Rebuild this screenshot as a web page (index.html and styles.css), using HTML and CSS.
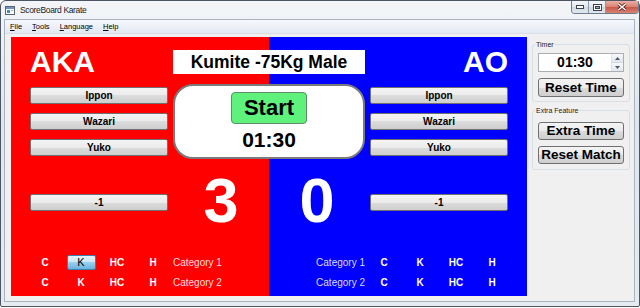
FILE: index.html
```html
<!DOCTYPE html>
<html>
<head>
<meta charset="utf-8">
<title>ScoreBoard Karate</title>
<link rel="stylesheet" href="styles.css">
</head>
<body>
<div class="window">
  <div class="titlebar">
    <span class="app-icon">
      <svg width="10" height="9" viewBox="0 0 10 9">
        <rect x="0.5" y="0.5" width="9" height="8" fill="#fff" stroke="#5a6470"/>
        <rect x="1" y="1" width="8" height="2" fill="#6d93c4"/>
        <rect x="2" y="4" width="3" height="3" fill="#3f8fb8"/>
        <rect x="6" y="4" width="2" height="1" fill="#9ab"/>
      </svg>
    </span>
    <span class="title">ScoreBoard Karate</span>
    <div class="caption-btns">
      <span class="cb">
        <svg width="8" height="4" viewBox="0 0 8 4"><rect x="0.5" y="0.5" width="7" height="3" fill="#fff" stroke="#3b4452"/></svg>
      </span>
      <span class="cb">
        <svg width="9" height="7" viewBox="0 0 9 7"><rect x="0.5" y="0.5" width="8" height="6" fill="#fff" stroke="#3b4452"/><rect x="2.5" y="2.5" width="4" height="2" fill="#9aa6b4" stroke="#3b4452"/></svg>
      </span>
      <span class="cb close">
        <svg width="10" height="8" viewBox="0 0 10 8"><path d="M1.5 1 L8.5 7 M8.5 1 L1.5 7" stroke="#5a1a12" stroke-width="3"/><path d="M1.5 1 L8.5 7 M8.5 1 L1.5 7" stroke="#fff" stroke-width="1.6"/></svg>
      </span>
    </div>
  </div>
  <div class="client">
    <div class="menubar">
      <span class="menu-item"><u>F</u>ile</span>
      <span class="menu-item"><u>T</u>ools</span>
      <span class="menu-item"><u>L</u>anguage</span>
      <span class="menu-item"><u>H</u>elp</span>
    </div>
    <div class="content">
      <div class="board">
        <div class="top">
          <div class="side-name">AKA</div>
          <div class="match-title">Kumite -75Kg Male</div>
          <div class="side-name ao">AO</div>

          <div class="btn-col">
            <button class="wbtn">Ippon</button>
            <button class="wbtn">Wazari</button>
            <button class="wbtn">Yuko</button>
          </div>
          <div class="clock-box">
            <button class="start">Start</button>
            <div class="clock">01:30</div>
          </div>
          <div class="btn-col">
            <button class="wbtn">Ippon</button>
            <button class="wbtn">Wazari</button>
            <button class="wbtn">Yuko</button>
          </div>

          <div class="minus-col"><button class="wbtn">-1</button></div>
          <div class="scores"><span>3</span><span>0</span></div>
          <div class="minus-col"><button class="wbtn">-1</button></div>
        </div>

        <div class="penalties">
          <div class="pen-half left">
            <div class="pen-row">
              <span class="pc">C</span>
              <span class="pc"><span class="kbtn">K</span></span>
              <span class="pc">HC</span>
              <span class="pc">H</span>
              <span class="cat">Category 1</span>
            </div>
            <div class="pen-row">
              <span class="pc">C</span>
              <span class="pc">K</span>
              <span class="pc">HC</span>
              <span class="pc">H</span>
              <span class="cat">Category 2</span>
            </div>
          </div>
          <div class="pen-half right">
            <div class="pen-row">
              <span class="cat">Category 1</span>
              <span class="pc">C</span>
              <span class="pc">K</span>
              <span class="pc">HC</span>
              <span class="pc">H</span>
            </div>
            <div class="pen-row">
              <span class="cat">Category 2</span>
              <span class="pc">C</span>
              <span class="pc">K</span>
              <span class="pc">HC</span>
              <span class="pc">H</span>
            </div>
          </div>
        </div>
      </div>

      <aside class="sidepanel">
        <fieldset class="group timer">
          <legend>Timer</legend>
          <div class="spin">
            <span class="spin-value">01:30</span>
            <span class="spin-arrows">
              <span class="arrow up"><svg width="5" height="3" viewBox="0 0 5 3"><path d="M0 3 L2.5 0 L5 3Z" fill="#4a5a6a"/></svg></span>
              <span class="arrow down"><svg width="5" height="3" viewBox="0 0 5 3"><path d="M0 0 L2.5 3 L5 0Z" fill="#4a5a6a"/></svg></span>
            </span>
          </div>
          <button class="sbtn">Reset Time</button>
        </fieldset>
        <fieldset class="group extra">
          <legend>Extra Feature</legend>
          <button class="sbtn">Extra Time</button>
          <button class="sbtn">Reset Match</button>
        </fieldset>
      </aside>
    </div>
  </div>
</div>
</body>
</html>
```

FILE: styles.css
```css
* { box-sizing: border-box; }

body {
  margin: 0;
  width: 640px;
  height: 308px;
  overflow: hidden;
  background: #ffffff;
  font-family: "Liberation Sans", Arial, sans-serif;
}

button {
  font-family: "Liberation Sans", Arial, sans-serif;
  margin: 0;
  padding: 0;
  color: #000;
  cursor: default;
}

.window {
  width: 640px;
  height: 307px;
  border: 1px solid #4d5562;
  border-radius: 6px 6px 2px 2px;
  background: linear-gradient(#f3f5f8, #dfe6ee 40%, #e6ebf1);
  display: flex;
  flex-direction: column;
}

/* title bar */
.titlebar {
  height: 18px;
  display: flex;
  align-items: flex-start;
  flex: none;
}

.app-icon {
  margin: 5px 0 0 4px;
  width: 10px;
  height: 9px;
  display: flex;
}

.title {
  margin: 4px 0 0 5px;
  font-size: 8.5px;
  line-height: 10px;
  letter-spacing: -0.35px;
  color: #1a1a1a;
}

.caption-btns {
  margin-left: auto;
  display: flex;
  height: 13px;
  border: 1px solid #6f7c8c;
  border-top: none;
  border-radius: 0 0 4px 4px;
  overflow: hidden;
}

.cb {
  width: 17px;
  height: 12px;
  display: flex;
  align-items: center;
  justify-content: center;
  background: linear-gradient(#f5f7fa, #dfe5ec 50%, #cfd8e2 50%, #e2e8ee);
  border-right: 1px solid #8d99a8;
}

.cb.close {
  width: 32px;
  border-right: none;
  background: linear-gradient(#e9b0a6, #d98070 50%, #c9584a 50%, #d88272);
}

/* client area */
.client {
  flex: 1;
  margin: 0 4px 4px 3px;
  border: 1px solid #a9b3bf;
  background: #f0f0f0;
  display: flex;
  flex-direction: column;
}

.menubar {
  height: 14px;
  flex: none;
  display: flex;
  align-items: center;
  background: linear-gradient(#f6f8fc, #e3e9f3);
  border-bottom: 1px solid #d9dee7;
  font-size: 7.5px;
  color: #000;
}

.menu-item {
  padding: 0 5px;
  line-height: 13px;
}

.content {
  flex: 1;
  display: flex;
  padding: 3px 0 0 6px;
}

/* board */
.board {
  width: 516px;
  height: 259px;
  flex: none;
  background: linear-gradient(to right, #ff0000 50%, #0000ff 50%);
  display: flex;
  flex-direction: column;
}

.top {
  display: grid;
  grid-template-columns: 138px 192px 138px;
  grid-template-rows: 24px 75px auto;
  column-gap: 5px;
  row-gap: 10px;
  padding: 13px 19px 0;
}

.side-name {
  font-size: 30px;
  font-weight: bold;
  line-height: 24px;
  color: #ffffff;
  white-space: nowrap;
}

.side-name.ao {
  text-align: right;
}

.match-title {
  background: #ffffff;
  font-size: 17.5px;
  font-weight: bold;
  line-height: 24px;
  text-align: center;
  color: #000;
  white-space: nowrap;
}

.btn-col {
  display: flex;
  flex-direction: column;
  gap: 9px;
  padding-top: 3px;
}

.wbtn {
  height: 17px;
  width: 100%;
  border: 1px solid #707070;
  border-radius: 2px;
  background: linear-gradient(#f4f4f4, #ebebeb 50%, #dcdcdc 50%, #cecece);
  font-size: 10px;
  font-weight: bold;
  line-height: 15px;
}

.clock-box {
  background: #ffffff;
  border: 2px solid #7b7b7b;
  border-radius: 20px;
  display: flex;
  flex-direction: column;
  align-items: center;
  padding-top: 6px;
}

.start {
  width: 76px;
  height: 32px;
  background: #5ef27c;
  border: 1px solid #5d8c66;
  border-radius: 4px;
  font-size: 22px;
  font-weight: bold;
  line-height: 30px;
}

.clock {
  margin-top: 5px;
  font-size: 21px;
  font-weight: bold;
  line-height: 21px;
  color: #000;
}

.minus-col {
  padding-top: 23px;
}

.scores {
  display: grid;
  grid-template-columns: 1fr 1fr;
  font-size: 63px;
  font-weight: bold;
  line-height: 63px;
  text-align: center;
  color: #ffffff;
}

/* penalties */
.penalties {
  margin-top: auto;
  padding-bottom: 4px;
  display: flex;
}

.pen-half {
  width: 258px;
  display: flex;
  flex-direction: column;
}

.pen-half.left { padding-left: 16px; }
.pen-half.right { padding-right: 17px; }
.pen-half.right .pen-row { justify-content: flex-end; }

.pen-row {
  height: 20px;
  display: flex;
  align-items: center;
}

.pc {
  width: 36px;
  display: flex;
  justify-content: center;
  font-size: 10px;
  font-weight: bold;
  color: #ffffff;
}

.kbtn {
  width: 29px;
  height: 15px;
  border: 1px solid #3c7fb1;
  border-radius: 2px;
  background: linear-gradient(#e5f4fc, #c4e5f6 50%, #98d1ef 50%, #68b3db);
  color: #000;
  font-size: 11px;
  font-weight: normal;
  line-height: 13px;
  text-align: center;
}

.cat {
  font-size: 10px;
  color: rgba(255, 255, 255, 0.86);
  white-space: nowrap;
}

.pen-half.left .cat { margin-left: 2px; }
.pen-half.right .cat { margin-right: 1px; }

/* side panel */
.sidepanel {
  flex: 1;
  display: flex;
  flex-direction: column;
}

.group {
  margin: 0 4px 0 5px;
  border: 1px solid #d5dfe5;
  border-radius: 3px;
  min-width: 0;
  display: flex;
  flex-direction: column;
}

.group legend {
  font-size: 7px;
  line-height: 7px;
  padding: 0 1px;
  margin-left: -3px;
  color: #222;
}

.group.timer {
  margin-top: 4px;
  padding: 5px 5px 4px;
  gap: 6px;
}

.group.extra {
  margin-top: 5px;
  padding: 8px 5px 5px;
  gap: 6px;
}

.spin {
  height: 19px;
  display: flex;
  background: #ffffff;
  border: 1px solid #abadb3;
}

.spin-value {
  flex: 1;
  text-align: center;
  font-size: 14px;
  font-weight: bold;
  line-height: 17px;
}

.spin-arrows {
  width: 12px;
  display: flex;
  flex-direction: column;
  border-left: 1px solid #dde2e8;
}

.arrow {
  flex: 1;
  display: flex;
  align-items: center;
  justify-content: center;
  background: linear-gradient(#f7f8fa, #e3e7ec);
}

.arrow.up { border-bottom: 1px solid #d3d9e0; }

.sbtn {
  width: 100%;
  height: 19px;
  border: 1px solid #707070;
  border-radius: 3px;
  background: linear-gradient(#f4f4f4, #ebebeb 50%, #dcdcdc 50%, #cecece);
  font-size: 13.5px;
  font-weight: bold;
  line-height: 17px;
  white-space: nowrap;
}

.group.extra .sbtn { height: 18px; line-height: 16px; }
```
